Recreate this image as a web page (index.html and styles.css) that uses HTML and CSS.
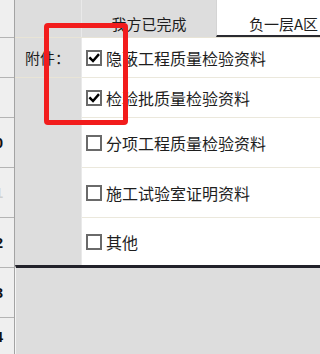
FILE: index.html
```html
<!DOCTYPE html>
<html lang="zh">
<head>
<meta charset="utf-8">
<link rel="stylesheet" href="styles.css">
</head>
<body>
<div class="left">
  <div class="lcell h38"></div>
  <div class="lcell h40"></div>
  <div class="lcell h40"></div>
  <div class="lcell h50"><span class="num">0</span></div>
  <div class="lcell h50"><span class="num faint">1</span></div>
  <div class="lcell h50"><span class="num">2</span></div>
  <div class="lcell h50"><span class="num">3</span></div>
  <div class="lcell h37"><span class="num">4</span></div>
</div>
<div class="main">
  <div class="header">
    <div class="h-spacer"></div>
    <div class="tab tab-active">我方已完成</div>
    <div class="tab tab-other">负一层A区</div>
  </div>
  <div class="form">
    <div class="label-col">
      <div class="label-cell">附件：</div>
    </div>
    <div class="rows">
      <div class="row r40"><span class="cb checked"><svg viewBox="0 0 12 12" width="12" height="12"><path d="M2.2 6.2 L5 9 L10.2 3" fill="none" stroke="#000" stroke-width="2.4" stroke-linecap="square"/></svg></span><span class="txt">隐蔽工程质量检验资料</span></div>
      <div class="row r40"><span class="cb checked"><svg viewBox="0 0 12 12" width="12" height="12"><path d="M2.2 6.2 L5 9 L10.2 3" fill="none" stroke="#000" stroke-width="2.4" stroke-linecap="square"/></svg></span><span class="txt">检验批质量检验资料</span></div>
      <div class="row r50"><span class="cb"></span><span class="txt">分项工程质量检验资料</span></div>
      <div class="row r50"><span class="cb"></span><span class="txt">施工试验室证明资料</span></div>
      <div class="row r48 last"><span class="cb"></span><span class="txt">其他</span></div>
    </div>
  </div>
  <div class="bottom"></div>
</div>
<div class="highlight"></div>
</body>
</html>
```

FILE: styles.css
```css
html, body {
  margin: 0;
  padding: 0;
  background: #dddddd;
}
body {
  width: 100%;
  min-width: 304px;
  height: 354px;
  overflow: hidden;
  display: flex;
  position: relative;
  font-family: "Noto Sans CJK SC", "Noto Sans", sans-serif;
  color: #1e1e1e;
}
.left {
  width: 14px;
  flex-shrink: 0;
  background: #efefef;
  border-right: 1px solid #a3a3a3;
}
.lcell {
  box-sizing: border-box;
  border-bottom: 1px solid #b4b4b4;
  display: flex;
  align-items: center;
  justify-content: flex-end;
  overflow: hidden;
  padding-right: 11px;
  font: bold 15px "Liberation Sans", sans-serif;
  color: #111;
}
.num.faint { color: #cfcfcf; }
.h38 { height: 38px; }
.h40 { height: 40px; }
.h50 { height: 50px; }
.h37 { height: 37px; border-bottom: none; }
.main {
  flex: 1;
  display: flex;
  flex-direction: column;
  min-width: 0;
}
.header {
  display: flex;
  height: 37px;
  flex-shrink: 0;
}
.h-spacer {
  width: 66px;
  border-right: 1px solid #e9e9e9;
  background: #dddddd;
}
.tab {
  box-sizing: border-box;
  display: flex;
  align-items: flex-end;
  font-size: 15px;
  line-height: 20px;
  white-space: nowrap;
  overflow: hidden;
}
.tab-active {
  width: 134px;
  background: #dddddd;
  justify-content: center;
  padding-bottom: 3px;
}
.tab-other {
  flex: 1;
  background: #ffffff;
  border-left: 1px solid #d4d4d4;
  border-bottom: 2px solid #2a2a30;
  padding-left: 32px;
  padding-bottom: 1px;
}
.form {
  display: flex;
  border-top: 1px solid #e8e4d6;
  flex-shrink: 0;
}
.label-col {
  width: 66px;
  border-right: 1px solid #e9e9e9;
  background: #dddddd;
}
.label-cell {
  box-sizing: border-box;
  height: 40px;
  border-bottom: 1px solid #e8e4d6;
  display: flex;
  align-items: center;
  padding-left: 10px;
  font-size: 15px;
}
.rows {
  flex: 1;
  background: #ffffff;
}
.row {
  box-sizing: border-box;
  display: flex;
  align-items: center;
  gap: 4px;
  padding-left: 4px;
  border-bottom: 1px solid #ebe8dc;
  white-space: nowrap;
  overflow: hidden;
}
.r40 { height: 40px; }
.r50 { height: 50px; }
.r48 { height: 48px; }
.row.last { border-bottom: none; height: 47px; }
.cb {
  box-sizing: border-box;
  width: 16px;
  height: 16px;
  flex-shrink: 0;
  border: 2px solid #6a6a6a;
  background: #ffffff;
  display: flex;
  align-items: center;
  justify-content: center;
}
.txt {
  font-size: 16px;
  line-height: 20px;
}
.bottom {
  flex: 1;
  border-top: 3px solid #22222a;
  border-left: 1px solid #f4f4f4;
  background: #dddddd;
}
.highlight {
  position: absolute;
  left: 44px;
  top: 23px;
  width: 84px;
  height: 102px;
  box-sizing: border-box;
  border: 5px solid #f21c1c;
  border-radius: 4px;
}
```
